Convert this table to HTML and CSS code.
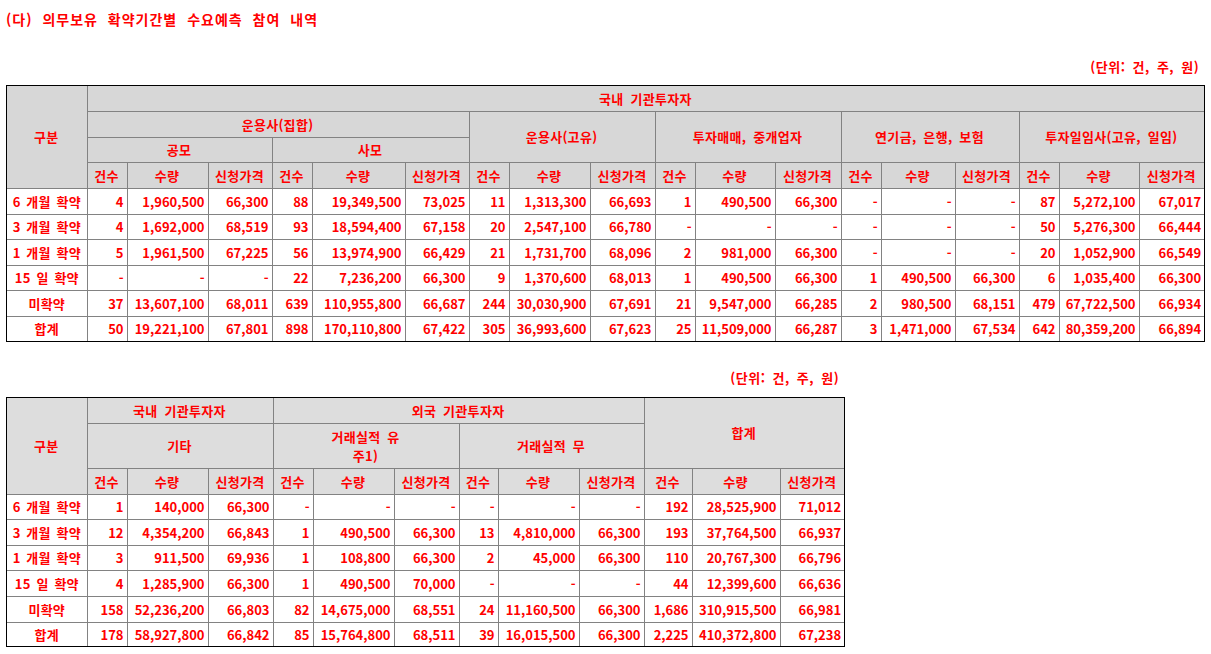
FILE: index.html
```html
<!DOCTYPE html>
<html lang="ko">
<head>
<meta charset="utf-8">
<title>의무보유 확약기간별 수요예측 참여 내역</title>
<link rel="stylesheet" href="styles.css">
</head>
<body>
<h1 class="title">(다) 의무보유 확약기간별 수요예측 참여 내역</h1>

<section class="block block-1">
  <div class="unit">(단위: 건, 주, 원)</div>
  <div class="frame">
    <table class="grid grid-1">
      <colgroup>
        <col style="width:80px"><col style="width:40px"><col style="width:81px"><col style="width:64px">
        <col style="width:40px"><col style="width:93px"><col style="width:64px">
        <col style="width:40px"><col style="width:81px"><col style="width:65px">
        <col style="width:40px"><col style="width:80px"><col style="width:66px">
        <col style="width:40px"><col style="width:74px"><col style="width:64px">
        <col style="width:40px"><col style="width:80px"><col style="width:65px">
      </colgroup>
      <thead>
        <tr class="h25">
          <th rowspan="4">구분</th>
          <th colspan="18">국내 기관투자자</th>
        </tr>
        <tr class="h26">
          <th colspan="6">운용사(집합)</th>
          <th colspan="3" rowspan="2">운용사(고유)</th>
          <th colspan="3" rowspan="2">투자매매, 중개업자</th>
          <th colspan="3" rowspan="2">연기금, 은행, 보험</th>
          <th colspan="3" rowspan="2">투자일임사(고유, 일임)</th>
        </tr>
        <tr class="h25">
          <th colspan="3">공모</th>
          <th colspan="3">사모</th>
        </tr>
        <tr class="h26">
          <th>건수</th><th>수량</th><th>신청가격</th>
          <th>건수</th><th>수량</th><th>신청가격</th>
          <th>건수</th><th>수량</th><th>신청가격</th>
          <th>건수</th><th>수량</th><th>신청가격</th>
          <th>건수</th><th>수량</th><th>신청가격</th>
          <th>건수</th><th>수량</th><th>신청가격</th>
        </tr>
      </thead>
      <tbody>
        <tr class="h26"><td class="label">6 개월 확약</td><td>4</td><td>1,960,500</td><td>66,300</td><td>88</td><td>19,349,500</td><td>73,025</td><td>11</td><td>1,313,300</td><td>66,693</td><td>1</td><td>490,500</td><td>66,300</td><td>-</td><td>-</td><td>-</td><td>87</td><td>5,272,100</td><td>67,017</td></tr>
        <tr class="h25"><td class="label">3 개월 확약</td><td>4</td><td>1,692,000</td><td>68,519</td><td>93</td><td>18,594,400</td><td>67,158</td><td>20</td><td>2,547,100</td><td>66,780</td><td>-</td><td>-</td><td>-</td><td>-</td><td>-</td><td>-</td><td>50</td><td>5,276,300</td><td>66,444</td></tr>
        <tr class="h26"><td class="label">1 개월 확약</td><td>5</td><td>1,961,500</td><td>67,225</td><td>56</td><td>13,974,900</td><td>66,429</td><td>21</td><td>1,731,700</td><td>68,096</td><td>2</td><td>981,000</td><td>66,300</td><td>-</td><td>-</td><td>-</td><td>20</td><td>1,052,900</td><td>66,549</td></tr>
        <tr class="h25"><td class="label">15 일 확약</td><td>-</td><td>-</td><td>-</td><td>22</td><td>7,236,200</td><td>66,300</td><td>9</td><td>1,370,600</td><td>68,013</td><td>1</td><td>490,500</td><td>66,300</td><td>1</td><td>490,500</td><td>66,300</td><td>6</td><td>1,035,400</td><td>66,300</td></tr>
        <tr class="h26"><td class="label">미확약</td><td>37</td><td>13,607,100</td><td>68,011</td><td>639</td><td>110,955,800</td><td>66,687</td><td>244</td><td>30,030,900</td><td>67,691</td><td>21</td><td>9,547,000</td><td>66,285</td><td>2</td><td>980,500</td><td>68,151</td><td>479</td><td>67,722,500</td><td>66,934</td></tr>
        <tr class="h25"><td class="label">합계</td><td>50</td><td>19,221,100</td><td>67,801</td><td>898</td><td>170,110,800</td><td>67,422</td><td>305</td><td>36,993,600</td><td>67,623</td><td>25</td><td>11,509,000</td><td>66,287</td><td>3</td><td>1,471,000</td><td>67,534</td><td>642</td><td>80,359,200</td><td>66,894</td></tr>
      </tbody>
    </table>
  </div>
</section>

<section class="block block-2">
  <div class="unit">(단위: 건, 주, 원)</div>
  <div class="frame">
    <table class="grid grid-2">
      <colgroup>
        <col style="width:80px"><col style="width:40px"><col style="width:81px"><col style="width:65px">
        <col style="width:40px"><col style="width:81px"><col style="width:65px">
        <col style="width:39px"><col style="width:81px"><col style="width:65px">
        <col style="width:48px"><col style="width:88px"><col style="width:64px">
      </colgroup>
      <thead>
        <tr class="h25">
          <th rowspan="3">구분</th>
          <th colspan="3">국내 기관투자자</th>
          <th colspan="6">외국 기관투자자</th>
          <th colspan="3" rowspan="2">합계</th>
        </tr>
        <tr class="h45">
          <th colspan="3">기타</th>
          <th colspan="3" class="two-line">거래실적 유<br>주1)</th>
          <th colspan="3">거래실적 무</th>
        </tr>
        <tr class="h26">
          <th>건수</th><th>수량</th><th>신청가격</th>
          <th>건수</th><th>수량</th><th>신청가격</th>
          <th>건수</th><th>수량</th><th>신청가격</th>
          <th>건수</th><th>수량</th><th>신청가격</th>
        </tr>
      </thead>
      <tbody>
        <tr class="h25"><td class="label">6 개월 확약</td><td>1</td><td>140,000</td><td>66,300</td><td>-</td><td>-</td><td>-</td><td>-</td><td>-</td><td>-</td><td>192</td><td>28,525,900</td><td>71,012</td></tr>
        <tr class="h26"><td class="label">3 개월 확약</td><td>12</td><td>4,354,200</td><td>66,843</td><td>1</td><td>490,500</td><td>66,300</td><td>13</td><td>4,810,000</td><td>66,300</td><td>193</td><td>37,764,500</td><td>66,937</td></tr>
        <tr class="h25"><td class="label">1 개월 확약</td><td>3</td><td>911,500</td><td>69,936</td><td>1</td><td>108,800</td><td>66,300</td><td>2</td><td>45,000</td><td>66,300</td><td>110</td><td>20,767,300</td><td>66,796</td></tr>
        <tr class="h26"><td class="label">15 일 확약</td><td>4</td><td>1,285,900</td><td>66,300</td><td>1</td><td>490,500</td><td>70,000</td><td>-</td><td>-</td><td>-</td><td>44</td><td>12,399,600</td><td>66,636</td></tr>
        <tr class="h26"><td class="label">미확약</td><td>158</td><td>52,236,200</td><td>66,803</td><td>82</td><td>14,675,000</td><td>68,551</td><td>24</td><td>11,160,500</td><td>66,300</td><td>1,686</td><td>310,915,500</td><td>66,981</td></tr>
        <tr class="h24"><td class="label">합계</td><td>178</td><td>58,927,800</td><td>66,842</td><td>85</td><td>15,764,800</td><td>68,511</td><td>39</td><td>16,015,500</td><td>66,300</td><td>2,225</td><td>410,372,800</td><td>67,238</td></tr>
      </tbody>
    </table>
  </div>
</section>
</body>
</html>
```

FILE: styles.css
```css
html, body {
  background: #ffffff;
}

body {
  margin: 0;
  padding: 9px 0 0 6px;
  color: #ff0000;
  font-family: "Noto Sans CJK KR", "Noto Sans", sans-serif;
  font-weight: 700;
}

.title {
  margin: 0;
  font-size: 14px;
  line-height: 20px;
  font-weight: 700;
  letter-spacing: 1px;
  word-spacing: 5px;
}

.block {
  width: fit-content;
}

.block-1 {
  margin-top: 30px;
}

.block-2 {
  margin-top: 28px;
}

.unit {
  text-align: right;
  font-size: 13px;
  line-height: 16px;
  letter-spacing: 0.5px;
  word-spacing: 3px;
  padding-right: 6px;
}

.block-1 .unit {
  margin-bottom: 10px;
}

.block-2 .unit {
  margin-bottom: 11px;
}

.frame {
  border: 1px solid #000000;
  width: fit-content;
}

.grid {
  border-collapse: collapse;
  border-style: hidden;
  table-layout: fixed;
  font-size: 13px;
  letter-spacing: 0;
}

.grid-1 {
  width: 1197px;
}

.grid-2 {
  width: 837px;
}

.grid th,
.grid td {
  border: 1px solid #828282;
  padding: 0 3px 0 2px;
  line-height: 15px;
  white-space: nowrap;
  overflow: hidden;
}

.grid th {
  text-align: center;
  font-weight: 700;
  letter-spacing: 0.3px;
  word-spacing: 3px;
}

.grid th.two-line {
  line-height: 19px;
}

.grid-1 th {
  background: #d7d7d7;
}

.grid-2 th {
  background: #dddddd;
}

.grid td {
  text-align: right;
  background: #ffffff;
}

.grid td.label {
  text-align: center;
  padding: 0 2px;
  letter-spacing: 0.2px;
  word-spacing: 2px;
}

.h24 { height: 24px; }
.h25 { height: 25px; }
.h26 { height: 26px; }
.h45 { height: 45px; }
```
